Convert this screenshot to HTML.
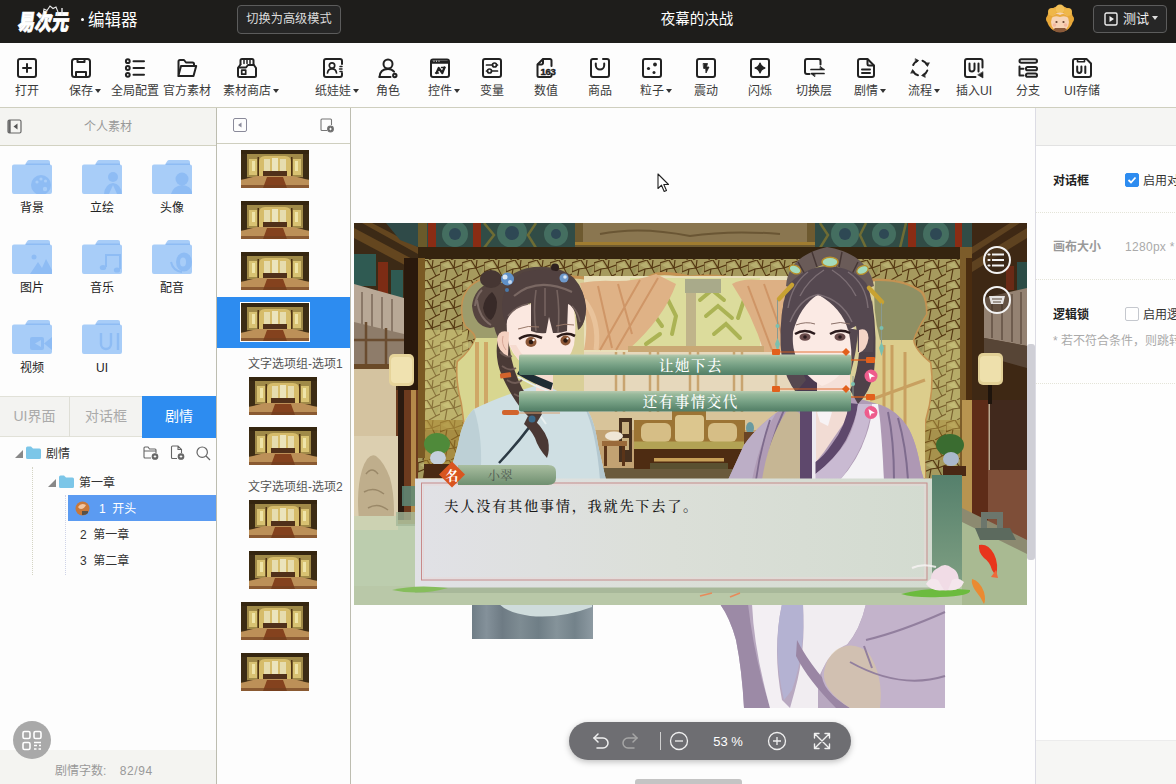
<!DOCTYPE html>
<html lang="zh-CN">
<head>
<meta charset="utf-8">
<title>易次元 · 编辑器</title>
<style>
*{box-sizing:border-box;margin:0;padding:0}
html,body{width:1176px;height:784px;overflow:hidden;background:#fdfdfd}
body{font-family:"Liberation Sans","Noto Sans CJK SC",sans-serif;font-size:12px;color:#333;position:relative}
.abs{position:absolute}
#hdr{position:absolute;left:0;top:0;width:1176px;height:43px;background:#1e1d1b;color:#fff}
#hdr .logo{position:absolute;left:15.5px;top:15px;font-size:17px;line-height:24px;font-weight:900;color:#fff;letter-spacing:0;transform:skewX(-8deg) scaleY(1.3);transform-origin:0 100%;-webkit-text-stroke:.6px #fff}
#hdr .brand{position:absolute;left:88px;top:9px;font-size:16.5px;line-height:22px;color:#fff;white-space:nowrap}
#hdr .mode{position:absolute;left:237px;top:5px;width:104px;height:29px;border:1px solid #5c5c5c;border-radius:4px;color:#dcdcdc;font-size:12.2px;line-height:27px;text-align:center;background:#262626}
#hdr .title{position:absolute;left:597px;top:8px;width:200px;text-align:center;font-size:14.5px;line-height:22px;color:#fff}
#hdr .test{position:absolute;left:1093px;top:5px;width:74px;height:28px;border:1px solid #5c5c5c;border-radius:4px;color:#eee;font-size:13px;line-height:26px;background:#262626}
#hdr .test svg{position:absolute;left:10px;top:6px;width:14px;height:14px}
#hdr .test span{position:absolute;left:29px;top:0}
#hdr .test i{position:absolute;left:58px;top:10px;width:0;height:0;border:3.5px solid transparent;border-top:4.5px solid #ddd;border-bottom:0}
#hdr .avatar{position:absolute;left:1046px;top:4px;width:28px;height:30px}
#tb{position:absolute;left:0;top:43px;width:1176px;height:65px;background:#fdfdfd;border-bottom:1px solid #cfcfbf}
.ti{position:absolute;top:0;width:0;height:60px}
.ti svg{position:absolute;left:-10px;top:15px;width:20px;height:20px;fill:none;stroke:#222;stroke-width:2;stroke-linecap:round;stroke-linejoin:round;overflow:visible}
.ti span{position:absolute;left:-50px;width:100px;top:40px;font-size:12px;line-height:16px;white-space:nowrap;color:#3a3a3a;text-align:center}
.ti span.c{left:-46px}
.ti span.c:after{content:"";display:inline-block;width:0;height:0;border:3.5px solid transparent;border-top:4.5px solid #333;border-bottom:0;margin-left:2px;vertical-align:2px}
/* left panel */
#lp{position:absolute;left:0;top:108px;width:217px;height:676px;background:#fdfdfd;border-right:1px solid #bdbdb0}
#lp .ph{position:absolute;left:0;top:0;width:216px;height:38px;background:#f4f4f1;border-bottom:1px solid #d2d2c2;color:#999;font-size:12px;line-height:38px;text-align:center}
.fold{position:absolute;width:40px;height:34px}
.fl{position:absolute;width:60px;margin-left:-10px;text-align:center;font-size:12px;line-height:14px;color:#222}
#tabs{position:absolute;left:0;top:288px;width:216px;height:41px;background:#f3f3f1;border-top:1px solid #e1e1d8;border-bottom:1px solid #e1e1d8}
#tabs div{position:absolute;top:0;height:40px;line-height:39px;text-align:center;font-size:14px;color:#aaa}
.tr{position:absolute;font-size:12px;line-height:16px;color:#333;white-space:nowrap}
#foot{position:absolute;left:0;top:642px;width:216px;height:34px;background:#f4f4f1;color:#999;font-size:12px;line-height:16px}
/* slides */
#sp{position:absolute;left:217px;top:108px;width:134px;height:676px;background:#fdfdfd;border-right:1px solid #bdbdb0}
#sp .ph{position:absolute;left:0;top:0;width:133px;height:36px;border-bottom:1px solid #cfcfbf}
.th{position:absolute;width:68px;height:38px}
.sl{position:absolute;font-size:12px;line-height:16px;color:#555;white-space:nowrap}
/* right */
#rp{position:absolute;left:1035px;top:108px;width:141px;height:676px;background:#fefefe;border-left:1px solid #dcdce4}
#rp .ph{position:absolute;left:0;top:0;width:141px;height:38px;background:#f5f5f3;border-bottom:1px solid #e2e2e2}
#rp .lb{position:absolute;left:17px;font-size:12px;line-height:16px;font-weight:bold;color:#222;white-space:nowrap}
#rp .tx{position:absolute;font-size:12px;line-height:16px;white-space:nowrap}
#rp .sep{position:absolute;left:0;width:141px;height:0;border-top:1px dotted #e4e4d8}
.cb{position:absolute;width:14px;height:14px;border:1px solid #c5c8ce;border-radius:2px;background:#fff}
.cb.on{background:#2d8cf0;border-color:#2d8cf0}
/* canvas */
#cv{position:absolute;left:351px;top:108px;width:684px;height:676px;background:#fdfdfd;overflow:hidden}
#zoom{position:absolute;left:218px;top:614px;width:282px;height:38px;border-radius:19px;background:#6e6e72;color:#fff;box-shadow:0 2px 6px rgba(0,0,0,.25)}
</style>
</head>
<body>
<div id="hdr">
  <div class="logo">易次元</div>
  <svg class="abs" style="left:40px;top:3px" width="26" height="16" viewBox="0 0 26 16" fill="none" stroke="#e8e8e8" stroke-width="1.100"><path d="M3 12L4 6L7 7.500L10 3L13 5.500L16 4L18 9L17 13"/><path d="M22 5V12" stroke-width="1.400"/></svg>
  <div class="abs" style="left:80.500px;top:17.500px;width:3.500px;height:3.500px;border-radius:2px;background:#fff"></div><div class="brand">编辑器</div>
  <div class="mode">切换为高级模式</div>
  <div class="title">夜幕的决战</div>
  <svg class="avatar" viewBox="0 0 28 30"><circle cx="14" cy="15" r="13" fill="#e9a93c"/><circle cx="6" cy="8" r="4" fill="#efb748"/><circle cx="22" cy="8" r="4" fill="#efb748"/><circle cx="14" cy="5" r="4.500" fill="#f2c058"/><circle cx="3.500" cy="15" r="3.500" fill="#e8a838"/><circle cx="24.500" cy="15" r="3.500" fill="#e8a838"/><ellipse cx="14" cy="18" rx="9" ry="9.500" fill="#f6d4b6"/><path d="M5 14Q9 8 14 11Q19 8 23 14Q19 11 14 13Q9 11 5 14Z" fill="#e9a93c"/><path d="M7 26Q14 31 21 26L19 24H9Z" fill="#8a5a3a"/><circle cx="10.500" cy="18" r="1.100" fill="#6a4632"/><circle cx="17.500" cy="18" r="1.100" fill="#6a4632"/><circle cx="8.500" cy="21" r="1.800" fill="#f3b8a0"/><circle cx="19.500" cy="21" r="1.800" fill="#f3b8a0"/></svg>
  <div class="test"><svg viewBox="0 0 14 14" fill="none" stroke="#eee" stroke-width="1.4"><rect x="1" y="1" width="12" height="12" rx="1.5"/><path d="M5.5 4 L10 7 L5.5 10Z" fill="#eee" stroke="none"/></svg><span>测试</span><i></i></div>
</div>
<div id="tb">
  <div class="ti" style="left:27px"><svg viewBox="0 0 20 20"><rect x="1" y="1" width="18" height="18" rx="2"/><path d="M10 6v8M6 10h8"/></svg><span>打开</span></div>
  <div class="ti" style="left:81px"><svg viewBox="0 0 20 20"><rect x="1" y="1" width="18" height="18" rx="2.5"/><path d="M6.5 1.5v2.500h7V1.500M5 18.500V14h10v4.500"/></svg><span class="c" style="left:-46px">保存</span></div>
  <div class="ti" style="left:135px"><svg viewBox="0 0 20 20"><circle cx="2.800" cy="3.200" r="1.900"/><circle cx="2.800" cy="10" r="1.900"/><circle cx="2.800" cy="16.800" r="1.900"/><path d="M8.500 3.200H19M8.500 10H19M8.500 16.800H19"/></svg><span>全局配置</span></div>
  <div class="ti" style="left:187px"><svg viewBox="0 0 20 20"><path d="M1.500 16V3.500a1.500 1.500 0 0 1 1.500-1.500h4l2 2.500h6.500a1.500 1.500 0 0 1 1.500 1.500v2"/><path d="M4 8h15.200l-2.700 10H1.300z"/></svg><span>官方素材</span></div>
  <div class="ti" style="left:247px"><svg viewBox="0 0 20 20"><path d="M3.500 6V2.500a1.500 1.500 0 0 1 1.500-1.500h10a1.500 1.500 0 0 1 1.500 1.500V6"/><path d="M7 1.500v4M10 1.500v4M13 1.500v4" stroke-width="1.500"/><path d="M3.500 6.500L1 10v7.500a1.500 1.500 0 0 0 1.500 1.500h15a1.500 1.500 0 0 0 1.500-1.500V10l-2.500-3.500"/><path d="M1.500 9.500h7.500l2-2.500h5.500"/><rect x="4.700" y="12.200" width="4" height="4" stroke-width="1.700"/></svg><span class="c">素材商店</span></div>
  <div class="ti" style="left:333px"><svg viewBox="0 0 20 20"><path d="M19 6V3a2 2 0 0 0-2-2H3a2 2 0 0 0-2 2v14a2 2 0 0 0 2 2h14a2 2 0 0 0 2-2v-2"/><circle cx="9" cy="7.500" r="2.700" stroke-width="1.700"/><path d="M4.500 15c.3-3 2.300-4.200 4.500-4.200s4.200 1.200 4.500 4.200" stroke-width="1.700"/><path d="M17 8.500h2M16.500 11h2.500M17 13.500h2" stroke-width="1.500"/></svg><span class="c">纸娃娃</span></div>
  <div class="ti" style="left:388px"><svg viewBox="0 0 20 20"><circle cx="10" cy="6" r="4.500"/><path d="M1.500 19c.3-5 3.500-8 8.500-8 2.500 0 4.600 1 6 2.700"/><path d="M1.500 19h11"/><circle cx="16.800" cy="17.500" r="1.700"/></svg><span>角色</span></div>
  <div class="ti" style="left:440px"><svg viewBox="0 0 20 20"><rect x="1" y="1.500" width="18" height="17.500" rx="2"/><path d="M1.500 3h17v2.200h-17z" fill="#222" stroke-width="1"/><path d="M3.500 3.200h1M6 3.200h1M8.500 3.200h1" stroke="#fff" stroke-width="1" stroke-linecap="butt"/><path d="M6.500 15l2.200-5 3.600 5 2.200-5.500" stroke-width="2.200"/><path d="M5.500 15h3M11.500 9.500h3.500" stroke-width="1.400"/></svg><span class="c">控件</span></div>
  <div class="ti" style="left:492px"><svg viewBox="0 0 20 20"><rect x="1" y="1" width="18" height="18" rx="2"/><path d="M4.500 7h6M15 7h.500M4.500 13h.500M10 13h5.500" stroke-width="1.700"/><circle cx="12.500" cy="7" r="2" stroke-width="1.700"/><circle cx="7.500" cy="13" r="2" stroke-width="1.700"/></svg><span>变量</span></div>
  <div class="ti" style="left:546px"><svg viewBox="0 0 20 20"><path d="M15.500 8V2.500a1.500 1.500 0 0 0-1.500-1.500H7L1.500 6.500V17.500a1.500 1.500 0 0 0 1.500 1.500h11a1.500 1.500 0 0 0 1.500-1.500V17"/><path d="M7 1.500V5a1.500 1.500 0 0 1-1.500 1.500H2"/><text x="4.600" y="16.600" font-family="Liberation Sans,sans-serif" font-size="9.600" font-weight="bold" fill="#222" stroke="#222" stroke-width=".4" letter-spacing="-0.400">163</text></svg><span>数值</span></div>
  <div class="ti" style="left:600px"><svg viewBox="0 0 20 20"><path d="M7 1H3a2 2 0 0 0-2 2v14a2 2 0 0 0 2 2h14a2 2 0 0 0 2-2V3a2 2 0 0 0-2-2h-4"/><path d="M5.800 5.500v1.800a4.200 4.200 0 0 0 8.400 0V5.500"/></svg><span>商品</span></div>
  <div class="ti" style="left:652px"><svg viewBox="0 0 20 20"><rect x="1" y="1" width="18" height="18" rx="2"/><circle cx="13" cy="6.500" r="1.900" fill="#222" stroke="none"/><circle cx="6.500" cy="10.500" r="1.600" fill="#222" stroke="none"/><circle cx="12" cy="14.500" r="1.500" fill="#222" stroke="none"/></svg><span class="c">粒子</span></div>
  <div class="ti" style="left:706px"><svg viewBox="0 0 20 20"><rect x="1" y="1" width="18" height="18" rx="2"/><path d="M7.500 5.500h4l-1 3.500h2.500l-3 6-.300-4.500H8z" fill="#222" stroke-width=".8"/></svg><span>震动</span></div>
  <div class="ti" style="left:760px"><svg viewBox="0 0 20 20"><rect x="1" y="1" width="18" height="18" rx="2"/><path d="M10 5.200Q11 9 14.800 10Q11 11 10 14.800Q9 11 5.200 10Q9 9 10 5.200z" fill="#222" stroke-width="1.400"/></svg><span>闪烁</span></div>
  <div class="ti" style="left:814px"><svg viewBox="0 0 20 20"><path d="M16.500 6.500V3a2 2 0 0 0-2-2H3a2 2 0 0 0-2 2v11a2 2 0 0 0 2 2h2.500"/><path d="M7 11.500h13M7.500 15.500h12.500" stroke-width="1.700"/><path d="M16.500 8.500l3.500 3h-3.500zM10.500 18.500l-3.500-3h3.500z" fill="#222" stroke-width=".8"/></svg><span>切换层</span></div>
  <div class="ti" style="left:866px"><svg viewBox="0 0 20 20"><path d="M11.500 1H4a2 2 0 0 0-2 2v14a2 2 0 0 0 2 2h12a2 2 0 0 0 2-2V7.500z"/><path d="M11.500 1.500V6a1.500 1.500 0 0 0 1.500 1.500h4.500"/><path d="M6 11.500h8M6 15h8" stroke-width="2"/></svg><span class="c">剧情</span></div>
  <div class="ti" style="left:920px"><svg viewBox="0 0 20 20"><path d="M3.200 7A7.600 7.600 0 0 1 7 3.200M12.500 2.700A7.600 7.600 0 0 1 16.800 6.500M17.300 12.500A7.600 7.600 0 0 1 13.500 16.800M8 17.300A7.600 7.600 0 0 1 3.200 13.500"/><path d="M5.500 .8L8.800 2.600L5.800 4.600zM19.300 5L17.500 8.500L15.500 5.300zM15 19.300L11.500 17.500L14.500 15.500zM.8 15L2.600 11.500L4.600 14.500z" fill="#222" stroke-width=".6"/></svg><span class="c">流程</span></div>
  <div class="ti" style="left:974px"><svg viewBox="0 0 20 20"><path d="M18.500 9.500V3a2 2 0 0 0-2-2H3a2 2 0 0 0-2 2v14a2 2 0 0 0 2 2h8.500"/><path d="M5.500 5.500v5.500a2.500 2.500 0 0 0 5 0V5.500M14.500 5.500v8"/><path d="M19 14v6l-5-3z" fill="#222" stroke-width=".6"/></svg><span>插入UI</span></div>
  <div class="ti" style="left:1028px"><svg viewBox="0 0 20 20"><rect x="1.500" y="1.200" width="17.500" height="3.600" rx="1.800"/><rect x="8" y="9" width="11" height="3.300" rx="1.600"/><rect x="8" y="15.500" width="11" height="3.300" rx="1.600"/><path d="M1.500 8.500v9h4M1.500 10.700h4"/></svg><span>分支</span></div>
  <div class="ti" style="left:1082px"><svg viewBox="0 0 20 20"><path d="M14.500 1H3a2 2 0 0 0-2 2v14a2 2 0 0 0 2 2h14a2 2 0 0 0 2-2V5.500z"/><path d="M5.500 1.500v2.300h7V1.500" stroke-width="1.600"/><path d="M5.200 8.500v4.300a2.100 2.100 0 0 0 4.200 0V8.500M13.300 8.500v6.500"/></svg><span>UI存储</span></div>
</div>
<svg width="0" height="0" style="position:absolute">
  <defs>
    <symbol id="fd" viewBox="0 0 40 34"><path d="M0 6.500Q0 4.500 2 4.500H13L15.500 .8Q16 0 17 0H36Q38 0 38 2V4.500Q40 4.500 40 6.500V32Q40 34 38 34H2Q0 34 0 32Z" fill="#a8cdf8"/><path d="M14.500 3.500H38V5H13.500Z" fill="#8ebcf4"/></symbol>
    <symbol id="thumb" viewBox="0 0 68 38" preserveAspectRatio="none">
      <rect width="68" height="38" fill="#584020"/>
      <rect x="0" y="0" width="68" height="4" fill="#352610"/>
      <rect x="6" y="4" width="56" height="23" fill="#a08a48"/>
      <path d="M18 27V12Q18 6 24 6H44Q50 6 50 12V27Z" fill="#d6bc6a"/>
      <rect x="23" y="9" width="6" height="13" fill="#e6dcae"/><rect x="31" y="8" width="6" height="14" fill="#ebe4bc"/><rect x="39" y="9" width="6" height="13" fill="#e6dcae"/>
      <rect x="8" y="9" width="8" height="16" fill="#d8c272"/>
      <rect x="52" y="9" width="8" height="16" fill="#d8c272"/>
      <rect x="11" y="11" width="3" height="10" fill="#efe4a8"/><rect x="54" y="11" width="3" height="10" fill="#efe4a8"/>
      <rect x="0" y="4" width="6" height="25" fill="#3c2c14"/>
      <rect x="62" y="4" width="6" height="25" fill="#3c2c14"/>
      <rect x="16.500" y="7" width="1.500" height="20" fill="#4e3214"/>
      <rect x="50" y="7" width="1.500" height="20" fill="#4e3214"/>
      <rect x="22" y="21" width="24" height="5" fill="#50301a"/>
      <path d="M0 38V30L16 26H52L68 30V38Z" fill="#bc9058"/>
      <path d="M22 38L26 27H42L46 38Z" fill="#84421e"/>
      <rect x="0" y="35" width="68" height="3" fill="#6e3e1e" opacity=".65"/>
    </symbol>
  </defs>
</svg>
<div id="lp">
  <div class="ph">个人素材
    <svg class="abs" style="left:7px;top:11px" width="15" height="15" viewBox="0 0 15 15" fill="none" stroke="#666" stroke-width="1.200"><rect x="1" y="1" width="13" height="13" rx="1.500"/><path d="M2.500 1v13" stroke-width="2.400"/><path d="M10.500 4.500v6l-4-3z" fill="#555" stroke="none"/></svg>
  </div>
  <svg class="fold" style="left:12px;top:52px"><use href="#fd"/><g fill="#8ebcf4"><circle cx="29" cy="25" r="10"/></g><g fill="#a8cdf8"><circle cx="25" cy="22" r="1.600"/><circle cx="29" cy="19" r="1.600"/><circle cx="33.500" cy="21" r="1.600"/><circle cx="33" cy="29" r="2.200"/></g></svg>
  <svg class="fold" style="left:82px;top:52px"><use href="#fd"/><g fill="#8ebcf4"><circle cx="31" cy="17" r="5"/><path d="M22 34Q23 24 31 23Q39 24 40 34Z"/></g><path d="M27 34L31 25L35 34Z" fill="#a8cdf8"/></svg>
  <svg class="fold" style="left:152px;top:52px"><use href="#fd"/><g fill="#8ebcf4"><circle cx="30" cy="19" r="6.500"/><path d="M19 34Q21 26 30 25Q39 26 40 32V34Z"/></g></svg>
  <div class="fl" style="left:12px;top:92.500px">背景</div>
  <div class="fl" style="left:82px;top:92.500px">立绘</div>
  <div class="fl" style="left:152px;top:92.500px">头像</div>
  <svg class="fold" style="left:12px;top:132px"><use href="#fd"/><g fill="#8ebcf4"><path d="M18 34L26 22L30 28L34 19L40 30V34Z"/><circle cx="22" cy="17" r="2.500"/></g></svg>
  <svg class="fold" style="left:82px;top:132px"><use href="#fd"/><g fill="none" stroke="#8ebcf4" stroke-width="2"><path d="M24 27V15H38V29"/></g><g fill="#8ebcf4"><ellipse cx="21" cy="27.500" rx="3.200" ry="2.600"/><ellipse cx="35" cy="30" rx="3.200" ry="2.600"/></g></svg>
  <svg class="fold" style="left:152px;top:132px"><use href="#fd"/><g fill="#8ebcf4"><ellipse cx="32" cy="22" rx="8" ry="9.500"/><path d="M19 22Q21 31 30 32" fill="none" stroke="#8ebcf4" stroke-width="2"/></g><ellipse cx="31" cy="22" rx="3" ry="4.500" fill="#a8cdf8"/></svg>
  <div class="fl" style="left:12px;top:172.500px">图片</div>
  <div class="fl" style="left:82px;top:172.500px">音乐</div>
  <div class="fl" style="left:152px;top:172.500px">配音</div>
  <svg class="fold" style="left:12px;top:212px"><use href="#fd"/><g fill="#8ebcf4"><rect x="18" y="17" width="14" height="13" rx="2"/><path d="M32 23.500L40 17V30Z"/></g><path d="M29 20L23 23.500L29 27Z" fill="#a8cdf8"/></svg>
  <svg class="fold" style="left:82px;top:212px"><use href="#fd"/><g fill="none" stroke="#8ebcf4" stroke-width="2.400"><path d="M19 13V24a5 5 0 0 0 10 0V13M36 13V30"/></g></svg>
  <div class="fl" style="left:12px;top:252.500px">视频</div>
  <div class="fl" style="left:82px;top:252.500px">UI</div>
  <div id="tabs">
    <div style="left:0;width:70px;border-right:1px solid #deded6">UI界面</div>
    <div style="left:70px;width:72px">对话框</div>
    <div style="left:142px;width:74px;background:#2d8cf0;color:#fff;top:-1px;height:42px;line-height:41px">剧情</div>
  </div>
  <!-- tree -->
  <svg class="abs" style="left:15px;top:342px" width="9" height="9"><path d="M8 0V8H0Z" fill="#888"/></svg>
  <svg class="abs" style="left:26px;top:338px" width="15" height="13" viewBox="0 0 15 13"><path d="M0 2Q0 .5 1.500 .5H5L7 2.500H13.500Q15 2.500 15 4V11.500Q15 13 13.500 13H1.500Q0 13 0 11.500Z" fill="#7cc6e8"/></svg>
  <div class="tr" style="left:46px;top:338px">剧情</div>
  <svg class="abs" style="left:143px;top:338px" width="16" height="14" viewBox="0 0 16 14" fill="none" stroke="#666" stroke-width="1.100"><path d="M8 12H2Q1 12 1 11V2Q1 1 2 1H5L6.500 3H12Q13 3 13 4V7M1 5H13"/><circle cx="12" cy="10.500" r="2.800" fill="#666"/><path d="M10.700 10.500h2.600M12 9.200v2.600" stroke="#fff" stroke-width=".9"/></svg>
  <svg class="abs" style="left:170px;top:337px" width="15" height="15" viewBox="0 0 15 15" fill="none" stroke="#666" stroke-width="1.100"><path d="M7 13.500H2.500Q1.500 13.500 1.500 12.500V2Q1.500 1 2.500 1H8L11.500 4.500V8M8 1V4.500H11.500"/><circle cx="11" cy="11.500" r="2.800" fill="#666"/><path d="M9.700 11.500h2.600M11 10.200v2.600" stroke="#fff" stroke-width=".9"/></svg>
  <svg class="abs" style="left:196px;top:338px" width="15" height="15" viewBox="0 0 15 15" fill="none" stroke="#666" stroke-width="1.200"><circle cx="6.200" cy="6.200" r="5.200"/><path d="M10 10L14 14"/></svg>
  <svg class="abs" style="left:48px;top:371px" width="9" height="9"><path d="M8 0V8H0Z" fill="#888"/></svg>
  <svg class="abs" style="left:59px;top:367px" width="15" height="13" viewBox="0 0 15 13"><path d="M0 2Q0 .5 1.500 .5H5L7 2.500H13.500Q15 2.500 15 4V11.500Q15 13 13.500 13H1.500Q0 13 0 11.500Z" fill="#7cc6e8"/></svg>
  <div class="tr" style="left:79px;top:366.500px">第一章</div>
  <div class="abs" style="left:32px;top:359px;width:0;height:108px;border-left:1px dotted #d4d4c4"></div>
  <div class="abs" style="left:65px;top:387px;width:0;height:80px;border-left:1px dotted #cfd4e8"></div>
  <div class="abs" style="left:68px;top:387px;width:148px;height:26px;background:#5b9bf2"></div>
  <svg class="abs" style="left:75px;top:393px" width="15" height="15" viewBox="0 0 15 15"><circle cx="7.500" cy="7.500" r="7" fill="#c8783a"/><path d="M3 6Q6 1 11 4Q9 8 6 8Q4 8 3 6Z" fill="#f3c7a2"/><path d="M7 14V10H13V12Q11 14.500 7 14Z" fill="#55504a"/></svg>
  <div class="tr" style="left:99px;top:393px;color:#fff">1&nbsp; 开头</div>
  <div class="tr" style="left:80px;top:419px">2&nbsp; 第一章</div>
  <div class="tr" style="left:80px;top:445px">3&nbsp; 第二章</div>
  <div id="foot"><span class="abs" style="left:55px;top:12.500px;white-space:nowrap">剧情字数:&nbsp;&nbsp;&nbsp; <span style="letter-spacing:.6px">82/94</span></span></div>
  <svg class="abs" style="left:13px;top:613px" width="38" height="38" viewBox="0 0 38 38"><circle cx="19" cy="19" r="19" fill="#a9a9a9"/><g fill="none" stroke="#fff" stroke-width="1.600"><rect x="10" y="10.500" width="7" height="7" rx="1.500"/><rect x="21" y="10.500" width="7" height="7" rx="1.500"/><rect x="10" y="21.500" width="7" height="7" rx="1.500"/><path d="M21 21.500h7M21 24.500h3M26 24.500h2M21 28h2.500M25.500 28h2.500" stroke-width="1.400"/></g></svg>
</div>
<div id="sp">
  <div class="ph">
    <svg class="abs" style="left:16px;top:10px" width="14" height="14" viewBox="0 0 14 14" fill="none" stroke="#8a8a9a" stroke-width="1"><rect x=".5" y=".5" width="13" height="13" rx="1.500"/><path d="M8.500 4.500v5l-3.500-2.500z" fill="#8a8a9a" stroke="none"/></svg>
    <svg class="abs" style="left:103px;top:10px" width="15" height="15" viewBox="0 0 15 15" fill="none" stroke="#777" stroke-width="1.100"><path d="M7 12.500H2Q1 12.500 1 11.500V2Q1 1 2 1H10.500Q11.500 1 11.500 2V7"/><circle cx="10.500" cy="11" r="2.900" fill="#666"/><path d="M9.200 11h2.600M10.500 9.700v2.600" stroke="#fff" stroke-width=".9"/></svg>
  </div>
  <svg class="th" style="left:24px;top:42px"><use href="#thumb"/></svg>
  <svg class="th" style="left:24px;top:93px"><use href="#thumb"/></svg>
  <svg class="th" style="left:24px;top:144px"><use href="#thumb"/></svg>
  <div class="abs" style="left:0;top:189px;width:133px;height:51px;background:#2d8cf0"></div>
  <div class="abs" style="left:23px;top:194px;width:70px;height:40px;background:#fff"></div>
  <svg class="th" style="left:24px;top:195px"><use href="#thumb"/></svg>
  <div class="sl" style="left:31px;top:247.500px">文字选项组-选项1</div>
  <svg class="th" style="left:32px;top:269px"><use href="#thumb"/></svg>
  <svg class="th" style="left:32px;top:319px"><use href="#thumb"/></svg>
  <div class="sl" style="left:31px;top:370.500px">文字选项组-选项2</div>
  <svg class="th" style="left:32px;top:392px"><use href="#thumb"/></svg>
  <svg class="th" style="left:32px;top:443px"><use href="#thumb"/></svg>
  <svg class="th" style="left:24px;top:494px"><use href="#thumb"/></svg>
  <svg class="th" style="left:24px;top:545px"><use href="#thumb"/></svg>
</div>
<div id="cv">
<svg class="abs" style="left:0;top:0" width="684" height="676" viewBox="351 108 684 676">
<defs>
  <clipPath id="sc"><rect x="354" y="223" width="673" height="382"/></clipPath>
  <pattern id="lat" width="22" height="20" patternUnits="userSpaceOnUse">
    <rect width="22" height="20" fill="#a69a5e"/>
    <path d="M0 3L9 0L14 8L22 5M0 12L7 9L14 8L18 16L22 14M7 9L5 20M18 16L11 20M0 3V12M9 0V-2M14 8L15 0" fill="none" stroke="#553812" stroke-width="1.200"/>
    <path d="M2 5L8 2L12 8L7 8Z" fill="#c0b878" opacity=".7"/><path d="M15 9L21 7L18 15Z" fill="#8e8a50" opacity=".6"/>
  </pattern>
  <pattern id="teal" width="56" height="24" patternUnits="userSpaceOnUse" x="426" y="223">
    <rect width="56" height="24" fill="#34544e"/>
    <rect x="1" y="0" width="8" height="24" fill="#8a2c14"/>
    <circle cx="32" cy="11" r="12" fill="#4f7f70"/>
    <circle cx="32" cy="11" r="6" fill="#3a6a6a"/>
    <path d="M12 0L20 12L12 24M52 0L44 12L52 24" stroke="#6a6a30" stroke-width="2" fill="none"/>
  </pattern>
  <linearGradient id="bar" x1="0" y1="0" x2="0" y2="1">
    <stop offset="0" stop-color="#b8cab0"/><stop offset=".15" stop-color="#9aba9c"/><stop offset=".5" stop-color="#78a286"/><stop offset=".85" stop-color="#5c886e"/><stop offset="1" stop-color="#527e68"/>
  </linearGradient>
  <linearGradient id="dlg" x1="0" y1="0" x2="1" y2="0"><stop offset="0" stop-color="#e1e1e6"/><stop offset=".5" stop-color="#dbdfd8"/><stop offset="1" stop-color="#d3dbd0"/></linearGradient>
  <linearGradient id="nm" x1="0" y1="0" x2="0" y2="1">
    <stop offset="0" stop-color="#a9bea0"/><stop offset="1" stop-color="#6f8f70"/>
  </linearGradient>
  <linearGradient id="gp" x1="0" y1="0" x2="0" y2="1">
    <stop offset="0" stop-color="#55806c"/><stop offset="1" stop-color="#86a486"/>
  </linearGradient>
  <linearGradient id="skirt" x1="0" y1="0" x2="1" y2="0">
    <stop offset="0" stop-color="#6f7d86"/><stop offset=".12" stop-color="#84919a"/><stop offset=".25" stop-color="#6e7b84"/><stop offset=".4" stop-color="#7e8c93"/><stop offset=".55" stop-color="#6f7e86"/><stop offset=".7" stop-color="#85939a"/><stop offset=".85" stop-color="#73828a"/><stop offset="1" stop-color="#8d9aa2"/>
  </linearGradient>
</defs>

<!-- characters below the scene -->
<g id="below">
  <path d="M472 604H593V639H472Z" fill="url(#skirt)"/>
  <path d="M478 604H592V607Q560 619 530 616Q508 613 499 604Z" fill="#cfdcdc"/>
  <path d="M720 604H945V708H744Q742 670 736 640Q730 618 720 604Z" fill="#b8a8c0"/>
  <path d="M720 604H748Q752 640 762 680L770 708H744Q742 670 736 640Q730 618 720 604Z" fill="#9c8aa6"/>
  <path d="M752 604H782Q772 650 782 700L790 708H770Q754 650 752 604Z" fill="#f3eff3"/>
  <path d="M782 604H803Q806 650 792 690L784 700Q772 650 782 604Z" fill="#b4b2d2"/>
  <path d="M803 604H866Q860 630 846 646Q826 656 818 680V708H790L795 690Q806 650 803 604Z" fill="#f1edf1"/>
  <path d="M797 640Q812 670 850 708H836Q808 680 796 656Z" fill="#9a86a4"/>
  <path d="M866 604H945V708H850Q820 690 822 672Q828 652 848 644Q860 630 866 604Z" fill="#c3b3cb"/>
  <path d="M836 650Q852 640 868 652Q884 676 880 708H850Q822 690 824 672Q826 658 836 650Z" fill="#dccb9c" opacity=".55"/>
  <path d="M866 640Q900 632 945 612M850 662Q900 690 945 676M864 646L872 668" stroke="#927f9e" stroke-width="2" fill="none"/>
</g>

<g clip-path="url(#sc)">
  <!-- base -->
  <rect x="354" y="223" width="673" height="382" fill="#b39a62"/>
  <!-- lattice wall -->
  <rect x="418" y="258" width="550" height="220" fill="url(#lat)"/>
  <rect x="424" y="330" width="44" height="100" fill="#e8e088" opacity=".35"/>
  <rect x="924" y="340" width="38" height="90" fill="#e8e088" opacity=".25"/>
  <rect x="424" y="420" width="44" height="46" fill="#a8842e" opacity=".55"/>
  <rect x="924" y="420" width="38" height="40" fill="#a8842e" opacity=".35"/>
  <!-- moon gate opening -->
  <path id="gate" d="M482 280Q466 286 463 302Q461 316 466 326Q477 334 476 340Q472 350 458 362Q456 380 462 403Q466 430 470 480H925Q922 440 925 420Q934 390 930 363Q914 350 913 340Q916 330 926 314Q926 296 921 292Q905 280 875 280H742Q716 274 690 277Q670 272 656 274Q634 284 612 283Q560 270 482 280Z" fill="#d9cf98" stroke="#c49252" stroke-width="3"/>
  <!-- left window inside gate -->
  <path d="M482 280Q466 286 463 302Q461 316 466 326Q476 333 476 338H530V279Q500 277 482 280Z" fill="#9d9c6c"/>
  <path d="M476 338Q472 350 458 362Q456 380 462 403Q466 430 470 480H530V338Z" fill="#d8d690"/>
  <path d="M477 342V478M486 342V478" stroke="#cfa766" stroke-width="4"/>
  <!-- center bright window -->
  <rect x="584" y="276" width="210" height="140" fill="#e9dfba"/>
  <rect x="630" y="278" width="130" height="72" fill="#dcdc9c"/>
  <g stroke="#a2ac48" stroke-width="4" fill="none" opacity=".85" stroke-linecap="round">
    <path d="M640 330L652 312L662 326M646 344L660 334M668 300L676 316L672 334M700 300L712 290L724 300M706 316L718 306L732 318M714 334L726 324L740 338M744 300L738 318"/>
  </g>
  <rect x="686" y="279" width="10" height="72" fill="#c0b48a"/>
  <rect x="685" y="279" width="36" height="14" fill="#a9aa8a"/>
  <!-- curtains -->
  <path d="M580 283Q600 280 612 281Q634 282 656 274L676 284Q664 318 628 350H584Q590 320 580 283Z" fill="#dfb286"/>
  <path d="M598 286L612 348M618 284L632 334M640 280L600 350M658 278L616 350" stroke="#c98c5c" stroke-width="2" fill="none" opacity=".75"/>
  <path d="M584 300Q600 320 596 350" stroke="#eccaa4" stroke-width="5" fill="none" opacity=".7"/>
  <path d="M732 284Q742 278 760 280H800V352H764Q752 314 732 284Z" fill="#ddb084"/>
  <path d="M748 286L772 350M764 284L784 340" stroke="#c98c5c" stroke-width="2" fill="none" opacity=".75"/>
  <!-- window frames -->
  <rect x="628" y="346" width="136" height="6" fill="#c9a874"/>
  <rect x="584" y="352" width="210" height="60" fill="#e6d8bc"/>
  <path d="M616 352V412M624 352V412M650 352V412M658 352V412M690 352V412M698 352V412M734 352V412M742 352V412M776 352V412" stroke="#c8a470" stroke-width="2.500"/>
  <rect x="584" y="412" width="30" height="18" fill="#b6c486"/>
  <!-- right fan-shaped shade inside gate -->
  <path d="M875 281Q905 280 921 293Q926 300 926 314Q916 330 913 340H880Q872 310 875 281Z" fill="#8f9064"/>
  <path d="M880 340H913Q914 350 930 363Q934 390 925 420V478H870V380Z" fill="#dccd8c"/>
  <path d="M884 345V478M892 345V478M905 352V478" stroke="#c8a060" stroke-width="3"/>
  <path d="M870 400L925 380" stroke="#c8a060" stroke-width="3"/>
  <!-- floor and furniture -->
  <rect x="584" y="428" width="212" height="52" fill="#c2a272"/>
  <rect x="584" y="412" width="212" height="18" fill="#d8c49a"/>
  <rect x="600" y="468" width="180" height="12" fill="#6a5a3c"/>
  <rect x="619" y="418" width="13" height="44" fill="#46301e"/>
  <rect x="622" y="422" width="7" height="12" fill="#c8b080"/><rect x="622" y="438" width="7" height="12" fill="#c8b080"/>
  <!-- sofa -->
  <path d="M634 420H672V411H706V420H745V448H634Z" fill="#9c7434"/>
  <rect x="641" y="423" width="30" height="19" rx="6" fill="#d6be86"/>
  <rect x="675" y="415" width="29" height="27" rx="4" fill="#dcc68e"/>
  <rect x="708" y="423" width="29" height="19" rx="6" fill="#d6be86"/>
  <rect x="634" y="441.500" width="111" height="7.500" fill="#b2a254"/>
  <rect x="634" y="449" width="111" height="20" fill="#4e2c12"/>
  <rect x="654" y="458" width="70" height="3.500" fill="#c8a058"/>
  <rect x="650" y="463" width="78" height="6" fill="#5a5030"/>
  <!-- small table -->
  <ellipse cx="614" cy="436" rx="9" ry="4.500" fill="#efe6d6"/>
  <rect x="602" y="441" width="25" height="5" fill="#9a6a3a"/>
  <rect x="604" y="446" width="3" height="20" fill="#5a3418"/><rect x="622" y="446" width="3" height="20" fill="#5a3418"/>
  <ellipse cx="750" cy="428" rx="4" ry="6" fill="#6a9aa0"/>
  <rect x="744" y="432" width="12" height="30" fill="#6a4424"/>
  <!-- top band -->
  <rect x="354" y="223" width="673" height="25" fill="#314c46"/>
  <g fill="#446e60"><circle cx="455" cy="234" r="13"/><circle cx="512" cy="233" r="15"/><circle cx="556" cy="234" r="12"/><circle cx="845" cy="234" r="14"/><circle cx="884" cy="234" r="12"/><circle cx="936" cy="234" r="13"/></g>
  <g fill="#2e4854"><circle cx="455" cy="234" r="6"/><circle cx="512" cy="233" r="7"/><circle cx="556" cy="234" r="5"/><circle cx="845" cy="234" r="6"/><circle cx="884" cy="234" r="5"/><circle cx="936" cy="234" r="6"/></g>
  <path d="M484 223L494 235L484 248M536 223L528 235L536 248M820 223L828 235L820 248M866 223L860 235L866 248M900 248L906 223" stroke="#6e6c34" stroke-width="2.500" fill="none"/>
  <rect x="418" y="223" width="9" height="25" fill="#6a5a2a"/>
  <rect x="428" y="223" width="8" height="25" fill="#8a2c14"/><rect x="473" y="223" width="8" height="25" fill="#8a2c14"/>
  <rect x="908" y="223" width="8" height="25" fill="#8a2c14"/><rect x="955" y="223" width="7" height="25" fill="#8a2c14"/>
  <rect x="575" y="223" width="240" height="25" fill="#6e5a30"/>
  <rect x="583" y="223" width="224" height="19" fill="#8a7650"/>
  <path d="M600 234Q640 226 690 236Q730 230 780 234" stroke="#6a5634" stroke-width="2" fill="none"/>
  <rect x="575" y="242" width="240" height="3" fill="#a07c30"/>
  <!-- beam -->
  <rect x="418" y="247" width="552" height="12" fill="#35240f"/>
  <!-- left wall -->
  <rect x="354" y="223" width="64" height="260" fill="#3c2a16"/>
  <path d="M354 228L418 262V272L354 238ZM372 223L418 247V254L362 223Z" fill="#64461f"/>
  <path d="M386 223H418V247L400 240Z" fill="#2f4a48"/>
  <rect x="354" y="254" width="22" height="32" fill="#2f5a52"/><rect x="378" y="262" width="10" height="34" fill="#7c2c14"/><rect x="391" y="270" width="12" height="34" fill="#2f5a52"/>
  <path d="M354 284L404 298V368H354Z" fill="#b8a896"/>
  <path d="M362 292V366M372 294V366M382 297V368M392 299V368" stroke="#8a7868" stroke-width="2"/>
  <path d="M354 322L404 334V368H354Z" fill="#8e7c6a"/><path d="M354 340H404M366 322V366M386 328V366" stroke="#6a4c30" stroke-width="2.500"/>
  <rect x="354" y="368" width="42" height="72" fill="#d4c3a0"/>
  <rect x="354" y="364" width="50" height="5" fill="#6a4a28"/>
  <!-- left pillar -->
  <rect x="404" y="258" width="20" height="180" fill="#2a190c"/>
  <rect x="418" y="258" width="7" height="200" fill="#7a5a24"/>
  <rect x="396" y="390" width="22" height="130" fill="#6c3a1e"/>
  <rect x="411" y="390" width="5" height="130" fill="#b48a4a"/>
  <!-- left lamp -->
  <rect x="398" y="384" width="6" height="136" fill="#2a1a10"/>
  <rect x="389" y="354" width="25" height="32" rx="5" fill="#e6d49a"/>
  <rect x="391" y="357" width="21" height="26" rx="4" fill="#f0e2b0"/>
  <!-- rock painting & green wash lower-left -->
  <rect x="354" y="436" width="44" height="96" fill="#dccfb0"/>
  <path d="M359 520Q356 490 362 470Q368 452 376 456Q384 462 390 478Q396 500 393 530H360Z" fill="#bfae8c"/>
  <path d="M366 474Q372 466 378 474M364 492Q374 486 384 494M368 508Q378 502 388 510" stroke="#9a8868" stroke-width="1.500" fill="none"/>
  <rect x="354" y="524" width="64" height="81" fill="#bccdae"/>
  <rect x="354" y="516" width="44" height="14" fill="#ccd2b2"/>
  
  
  <rect x="402" y="486" width="16" height="20" fill="#5e8a78" opacity=".85"/>
  <rect x="396" y="512" width="22" height="14" fill="#a4b898" opacity=".8"/>
  <!-- plant left -->
  <ellipse cx="437" cy="444" rx="13" ry="11" fill="#4f8a3a"/>
  <ellipse cx="438" cy="458" rx="8" ry="7" fill="#c4d0dc"/>
  <rect x="424" y="464" width="34" height="14" fill="#4a2a14"/>
  <!-- right pillar and wall -->
  <rect x="960" y="247" width="12" height="240" fill="#7c5c2a"/>
  <rect x="966" y="258" width="8" height="230" fill="#4a2c10"/>
  <rect x="972" y="223" width="55" height="320" fill="#3e2814"/>
  <path d="M1027 228L972 262V272L1027 238ZM1010 223L972 247V254L1020 223Z" fill="#5e4220"/>
  <rect x="1006" y="266" width="8" height="24" fill="#6a2a16"/><rect x="1017" y="262" width="10" height="28" fill="#2c4c46"/>
  <path d="M984 298L1027 288V346L984 338Z" fill="#948272"/>
  <path d="M992 298V338M1002 296V340M1012 294V342M1021 292V344" stroke="#6e5c4e" stroke-width="2"/><path d="M984 338L1027 346V368L984 356Z" fill="#5e4c3e" opacity=".8"/>
  <rect x="962" y="400" width="10" height="126" fill="#b89450"/><rect x="972" y="400" width="17" height="126" fill="#5e2c18"/>
  <rect x="988.500" y="400" width="1.500" height="120" fill="#b8a890"/>
  <rect x="990" y="400" width="37" height="110" fill="#41291d"/>
  <path d="M988 470H1027V542L988 522Z" fill="#7e4e38"/>
  <!-- right lamp -->
  <rect x="988" y="384" width="4" height="20" fill="#1e140c"/>
  <rect x="978" y="353" width="25" height="32" rx="5" fill="#e2d096"/>
  <rect x="980" y="356" width="21" height="26" rx="4" fill="#eee0ac"/>
  <!-- right plant -->
  <ellipse cx="950" cy="445" rx="14" ry="11" fill="#3a6c30"/>
  <ellipse cx="951" cy="459" rx="8" ry="7" fill="#aab8cc"/>
  <rect x="943" y="466" width="23" height="10" fill="#4a2814"/>
  <!-- lower right: green pillar, pond -->
  <rect x="932" y="475" width="30" height="130" fill="url(#gp)"/>
  <path d="M962 520L1027 552V605H962Z" fill="#a9ba92"/>
  <path d="M962 508L1027 540V554L962 522Z" fill="#8c8a70"/>
  <path d="M981 512H1003V530H997V519H987V530H981Z" fill="#6c766c"/><path d="M975 528H1010L1016 540H980Z" fill="#5c6a5e"/>
  <!-- ===== left character ===== -->
  <g id="lc">
    <!-- dress -->
    <path d="M535 386Q500 396 474 409Q462 420 458 445L448 480H606L598 445Q594 416 584 406Q566 396 552 388Z" fill="#cfdfe3"/>
    <path d="M474 409Q484 440 480 480H448L458 445Q462 420 474 409Z" fill="#bdd0d6"/>
    <path d="M584 406Q596 430 600 480H606L598 445Q594 416 584 406Z" fill="#b4c8d0"/>
    <path d="M549 398Q530 430 499 463" stroke="#2c3a44" stroke-width="2.500" fill="none"/>
    <path d="M532 404L546 424" stroke="#e8f0f0" stroke-width="2" fill="none"/>
    <!-- neck & collar -->
    <path d="M536 372H553V392H536Z" fill="#f6dcd0"/>
    <path d="M517 374Q534 384 551 390L553 383Q536 376 520 369Z" fill="#1e2c34"/>
    <path d="M518 377Q534 386 550 392" stroke="#e8f0f0" stroke-width="1.500" fill="none"/>
    <!-- back hair / braid -->
    <path d="M498 338Q494 358 502 376Q512 398 524 412L536 424L542 414Q530 402 522 388Q512 368 510 350L508 338Z" fill="#4a3a36"/>
    <path d="M500 352Q506 358 512 356M502 366Q510 372 516 368M507 380Q516 386 522 380M514 394Q524 400 528 392M522 406Q532 412 536 404" stroke="#705c56" stroke-width="1.800" fill="none"/>
    <path d="M528 416Q542 424 548 440Q550 450 547 458Q538 448 535 438Q531 430 524 424Z" fill="#4a3834"/>
    <circle cx="532" cy="419" r="3.500" fill="#3a6a8a"/>
    <rect x="500" y="373" width="11" height="5" rx="1" fill="#d2642c" transform="rotate(-8 505 375)"/>
    <rect x="502" y="410" width="17" height="5" rx="2" fill="#d2642c"/>
    <path d="M519 413H560" stroke="#d8a070" stroke-width="1.200"/>
    <!-- hair back mass -->
    <path d="M498 338Q488 316 496 292Q508 270 534 267Q560 265 574 278Q588 294 585 316Q584 326 578 330L574 300H510L508 336Z" fill="#54443f"/>
    <!-- left loop bun -->
    <path d="M490 283Q474 288 472 306Q474 326 490 328Q504 326 506 306Q508 290 502 283Z" fill="#55443f"/>
    <path d="M492 292Q484 298 483 308Q485 318 491 320Q497 314 497 302Q496 296 492 292Z" fill="#382a28"/>
    <path d="M477 300Q479 318 491 325M482 290Q476 296 475 306" stroke="#7c6a64" stroke-width="2" fill="none"/>
    <ellipse cx="491" cy="279" rx="11" ry="9" fill="#463633"/>
    <circle cx="555" cy="267.500" r="4" fill="#2e201e"/>
    <!-- face -->
    <path d="M508 305Q505 330 509 345Q516 362 534 372H556Q570 360 574 345Q577 325 573 303Z" fill="#fbe8e0"/>
    <path d="M509 332Q498 329 497 340Q498 352 508 356Z" fill="#f4d0c0"/>
    <path d="M503 336Q501 344 506 350" stroke="#d8a898" stroke-width="1" fill="none"/>
    <path d="M510 345Q516 362 534 372H540Q524 360 516 345Z" fill="#f3d2c4" opacity=".6"/>
    <!-- bangs -->
    <path d="M506 324Q510 307 531 303L531 331Q538 334 546 333L549 317L553 333Q560 333.500 567 331L568 304Q576 307 579 329Q587 320 586 306Q583 284 566 274Q546 266 524 272Q503 283 502 304Q502 316 506 324Z" fill="#514140"/>
    <path d="M536 290Q533 310 536 331M545 288V316M557 290Q560 310 558 332" stroke="#75635f" stroke-width="1.600" fill="none"/>
    <path d="M514 296Q538 276 572 292" stroke="#7a6863" stroke-width="2.200" fill="none"/>
    <path d="M508 316Q516 306 528 304M572 306Q578 312 580 322" stroke="#75635f" stroke-width="1.500" fill="none"/>
    <!-- eyes -->
    <path d="M519 339Q529 332 542 338" stroke="#2a1a18" stroke-width="2.600" fill="none"/>
    <ellipse cx="531" cy="342" rx="5.500" ry="5" fill="#8a5636"/><circle cx="531" cy="342" r="2.300" fill="#2a1810"/><circle cx="533.500" cy="340" r="1.200" fill="#fff"/>
    <path d="M557 337Q566 331 575 336" stroke="#2a1a18" stroke-width="2.600" fill="none"/>
    <ellipse cx="565.500" cy="340.500" rx="5" ry="5" fill="#8a5636"/><circle cx="565.500" cy="340.500" r="2.200" fill="#2a1810"/><circle cx="567.500" cy="338.500" r="1.100" fill="#fff"/>
    <path d="M518 329Q528 325 539 327M556 326Q565 323 574 325" stroke="#9a7a6a" stroke-width="1" fill="none"/>
    <!-- flowers -->
    <circle cx="507.500" cy="279" r="6.500" fill="#5f90c8"/><circle cx="505" cy="277" r="2.500" fill="#dde8f4"/><circle cx="510" cy="282" r="2" fill="#c8daf0"/><circle cx="507" cy="290" r="2" fill="#4a78a8"/>
    <circle cx="564" cy="278" r="4.500" fill="#6f9acc"/><circle cx="565" cy="277" r="1.800" fill="#dde8f4"/>
  </g>
  <!-- ===== right character ===== -->
  <g id="rc">
    <!-- robe -->
    <path d="M800 400Q786 406 776 413Q756 428 744 445L728 480H924L921 470Q916 440 907 426Q896 410 881 405L850 396Z" fill="#b09cb6"/>
    <path d="M776 413Q756 428 744 445L728 480H752Q760 440 776 413Z" fill="#bcaec6"/>
    <path d="M770 420Q760 450 756 480M784 410Q770 440 764 480" stroke="#7d6a8c" stroke-width="1.800" fill="none"/>
    <path d="M786 412Q796 408 800 414V480H762Q768 440 786 412Z" fill="#c6b694"/>
    <path d="M800 406H812V480H800Z" fill="#5e486c"/>
    <path d="M812 408H816V480H812Z" fill="#eeeaf0"/>
    <path d="M816 408L850 398L846 420L824 452L816 462Z" fill="#f2dcd4"/>
    <path d="M817 412Q824 408 832 412L828 426L820 422Z" fill="#f7f3f5"/>
    <path d="M849 403Q846 426 832 444Q824 456 815.500 462V474Q836 458 846 440Q856 420 858 404Z" fill="#5e486c"/>
    <path d="M858 404Q856 424 846 442Q834 460 815.500 474V480H840Q862 452 868 426Q872 412 872 404Z" fill="#c9bad2"/>
    <path d="M872 404Q872 420 866 436Q858 460 840 480H884Q882 440 880 420L878 404Z" fill="#f4f2f5"/>
    <path d="M879 405Q896 410 907 426Q916 440 921 470L924 480H884Q884 440 879 405Z" fill="#ae98b4"/>
    <path d="M888 412Q894 440 894 480M898 418Q906 446 908 480" stroke="#7f6c8e" stroke-width="2" fill="none"/>
    <path d="M797 375H817V391H797Z" fill="#4a3a50"/>
    <path d="M817 372H850V392H817Z" fill="#f5e0d8"/>
    <!-- hair long sides -->
    <path d="M784 300Q778 330 782 360Q786 380 796 392L806 380Q796 360 796 330Z" fill="#554850"/>
    <path d="M872 300Q878 340 874 372Q870 392 858 404L850 390Q860 370 860 330Z" fill="#4e4149"/>
    <!-- top bun arch -->
    <path d="M786 286Q788 256 827 247Q868 254 874 286L858 292Q852 268 828 264Q802 268 800 292Z" fill="#6a5b58"/>
    <path d="M798 262L806 276M812 252L817 267M842 252L839 267M858 262L851 276" stroke="#463735" stroke-width="1.500"/>
    <!-- face -->
    <path d="M793 312Q790 340 796 358Q806 378 822 386Q840 380 850 360Q856 340 852 310L820 292Z" fill="#fbeae4"/>
    <!-- hair cap -->
    <path d="M783 352Q779 302 790 283Q806 267 828 266Q852 267 866 283Q876 302 873 352L866 352L858 352Q858 336 856 326L848 330Q842 308 818 294.500Q800 306 793 332L792 352Z" fill="#554850"/>
    <path d="M818 294.500Q800 298 790 322M818 294.500Q842 300 852 322M808 272Q792 284 788 308M848 272Q866 284 868 308M824 270Q808 280 800 296M832 270Q848 280 856 296" stroke="#7c6e74" stroke-width="1.400" fill="none"/>
    <path d="M859 330Q868 327 868.500 338Q867 350 859 353Z" fill="#f4d4c6"/>
    <path d="M848 328Q853 350 851 372Q857 350 858 330Z" fill="#554850"/>
    <!-- eyes -->
    <path d="M795 334Q805 328 815 334" stroke="#2a1a1c" stroke-width="2.400" fill="none"/>
    <ellipse cx="805" cy="337" rx="5.500" ry="3.800" fill="#6a4c4c"/><circle cx="805" cy="337" r="1.800" fill="#2a1a1c"/>
    <path d="M830 334Q840 328 850 333" stroke="#2a1a1c" stroke-width="2.400" fill="none"/>
    <ellipse cx="840" cy="337" rx="5.500" ry="3.800" fill="#6a4c4c"/><circle cx="840" cy="337" r="1.800" fill="#2a1a1c"/>
    <path d="M796 325Q806 321 815 324M831 324Q840 321 850 324" stroke="#8a7068" stroke-width="1" fill="none"/>
    <!-- ornaments -->
    <ellipse cx="830" cy="262" rx="8" ry="4.800" fill="#a5dcbc" stroke="#b8902c" stroke-width="1.500"/>
    <ellipse cx="795" cy="269.500" rx="6" ry="4" fill="#a5dcbc" stroke="#b8902c" stroke-width="1.200" transform="rotate(25 795 269.500)"/>
    <ellipse cx="862.500" cy="270" rx="6" ry="4" fill="#a5dcbc" stroke="#b8902c" stroke-width="1.200" transform="rotate(-25 862.500 270)"/>
    <path d="M779 299L792 285" stroke="#c8a232" stroke-width="4.500" stroke-linecap="round"/>
    <path d="M869 288L882 302" stroke="#c8a232" stroke-width="4.500" stroke-linecap="round"/>
    <path d="M777.500 300V348M881.500 303V352" stroke="#8a9a90" stroke-width="1"/>
    <circle cx="777.500" cy="326" r="2" fill="#7ac0b0"/><path d="M775 344L777.500 338L780 344L777.500 352Z" fill="#7ac0b0"/>
    <circle cx="881.500" cy="328" r="2" fill="#7ac0b0"/><path d="M879 348L881.500 342L884 348L881.500 356Z" fill="#7ac0b0"/>
    <path d="M853 376V398" stroke="#8a9a90" stroke-width="1"/><circle cx="853" cy="384" r="2" fill="#7ac0b0"/>
  </g>
  <!-- ===== UI overlays ===== -->
  <!-- dialog area -->
  <rect x="354" y="586" width="608" height="19" fill="#b9c8a8"/>
  <rect x="415" y="587" width="517" height="6" fill="#a8b89a"/>
  <rect x="415" y="478.500" width="517" height="109" fill="url(#dlg)"/>
  <rect x="421.500" y="483" width="505.500" height="97" fill="none" stroke="#c88a8a" stroke-width="1"/>
  <rect x="423.500" y="485" width="501.500" height="93" fill="none" stroke="#e8d8d8" stroke-width="1"/>
  <!-- name tag -->
  <path d="M458 465H548Q556 465 556 472V478Q556 485 548 485H458Z" fill="url(#nm)"/>
  <path d="M452 461.500L465 474.500L452 487.500L439 474.500Z" fill="#d9551f"/>
  <text x="452" y="479.500" text-anchor="middle" font-family="'Liberation Serif','Noto Serif CJK SC',serif" font-size="13" font-weight="bold" fill="#fff">名</text>
  <text x="500" y="480" text-anchor="middle" font-family="'Liberation Serif','Noto Serif CJK SC',serif" font-size="12.500" fill="#505a50">小翠</text>
  <text x="444.300" y="511" font-family="'Liberation Serif','Noto Serif CJK SC',serif" font-size="14.200" font-weight="500" letter-spacing="1.730" fill="#1a1a1a">夫人没有其他事情，我就先下去了。</text>
  <!-- lotus / fish -->
  <path d="M901 594Q930 586 970 590Q972 596 940 597Q915 598 901 594Z" fill="#6cbb3e"/>
  <path d="M932 588Q928 572 938 568Q945 562 952 568Q961 572 958 588Q946 593 932 588Z" fill="#f1dce6"/>
  <path d="M926 584Q930 576 938 580L944 590Q932 592 926 584ZM964 582Q958 576 952 580L948 590Q960 592 964 582Z" fill="#f4e6ec"/>
  <path d="M979 545Q988 543 994 554Q999 564 996 576L992 570Q990 562 984 558Q978 552 979 545Z" fill="#e8351c"/><path d="M996 570L998 578L991 577Z" fill="#ee6a3a"/>
  <path d="M972 579Q980 581 984 592Q986 600 984 604Q980 596 975 590Q971 584 972 579Z" fill="#ea8a32"/>
  <path d="M912 568Q922 563 936 567" stroke="#f6f2f2" stroke-width="2" fill="none" opacity=".85"/>
  <path d="M392 590Q416 584 448 588Q420 596 392 590Z" fill="#86bd5c"/>
  <path d="M700 596L712 593M730 597L740 593" stroke="#e88a5a" stroke-width="1.500"/>
  <!-- option bars -->
  <rect x="519" y="354.500" width="332" height="20.500" rx="2" fill="url(#bar)"/>
  <rect x="519" y="391" width="332" height="20.500" rx="2" fill="url(#bar)"/>
  <text x="691" y="371" text-anchor="middle" font-family="'Liberation Serif','Noto Serif CJK SC',serif" font-size="14.500" font-weight="500" letter-spacing="1.500" fill="#fff">让她下去</text>
  <text x="690.800" y="407" text-anchor="middle" font-family="'Liberation Serif','Noto Serif CJK SC',serif" font-size="14.500" font-weight="500" letter-spacing="1.500" fill="#fff">还有事情交代</text>
  <!-- orange handles -->
  <g fill="#e2601c" stroke="#e2601c">
    <path d="M775 352H846" stroke-width="1" opacity=".85"/><rect x="772" y="349" width="8" height="6" rx="1" stroke="none"/><path d="M846 348L850 352L846 356L842 352Z" stroke="none"/>
    <path d="M851 360H872" stroke-width="1.300"/><rect x="866" y="357" width="9" height="6" rx="1" stroke="none"/>
    <path d="M775 389H846" stroke-width="1" opacity=".85"/><rect x="772" y="386" width="8" height="6" rx="1" stroke="none"/><path d="M846 385L850 389L846 393L842 389Z" stroke="none"/>
    <path d="M851 397H872" stroke-width="1.300"/><rect x="866" y="394" width="9" height="6" rx="1" stroke="none"/>
  </g>
  <circle cx="871" cy="376" r="6.500" fill="#ee5c8c"/><path d="M868.500 372.500L875 376.500L871.500 377L870 380Z" fill="#fff"/>
  <circle cx="871" cy="412.500" r="6.500" fill="#ee5c8c"/><path d="M868.500 409L875 413L871.500 413.500L870 416.500Z" fill="#fff"/>
  <!-- round buttons -->
  <circle cx="997" cy="260" r="13" fill="#3a2a1c" fill-opacity=".55" stroke="#f4f4f4" stroke-width="2"/>
  <path d="M992 254.500H1004M992 260H1004M992 265.500H1004" stroke="#f4f4f4" stroke-width="2"/><path d="M988.500 254.500H989.500M988.500 260H989.500M988.500 265.500H989.500" stroke="#f4f4f4" stroke-width="2.200" stroke-linecap="round"/>
  <circle cx="997" cy="300" r="13" fill="#3a2a1c" fill-opacity=".55" stroke="#f4f4f4" stroke-width="2"/>
  <path d="M989 296H1005L1003 304H991Z" fill="#f4f4f4" opacity=".9"/><path d="M992 299H1002M993 302H1001" stroke="#5a4a3c" stroke-width="1"/>
</g>
</svg>
  <div class="abs" style="left:676px;top:236px;width:8px;height:216px;background:#cfcfd6;border-radius:3px"></div>
  <div class="abs" style="left:284px;top:671px;width:107px;height:6px;background:#c4c4c4;border-radius:3px 3px 0 0"></div>
  <div id="zoom">
    <svg class="abs" style="left:22px;top:9px" width="20" height="20" viewBox="0 0 20 20" fill="none" stroke="#f0f0f0" stroke-width="1.500" stroke-linecap="round" stroke-linejoin="round"><path d="M3 7h9a5 5 0 0 1 0 10H6"/><path d="M7 3L3 7l4 4"/></svg>
    <svg class="abs" style="left:51px;top:9px" width="20" height="20" viewBox="0 0 20 20" fill="none" stroke="#a6a6a6" stroke-width="1.500" stroke-linecap="round" stroke-linejoin="round"><path d="M17 7H8a5 5 0 0 0 0 10h6"/><path d="M13 3l4 4-4 4"/></svg>
    <div class="abs" style="left:91px;top:10px;width:1px;height:18px;background:#cfcfcf"></div>
    <svg class="abs" style="left:100px;top:9px" width="20" height="20" viewBox="0 0 20 20" fill="none" stroke="#f0f0f0" stroke-width="1.300"><circle cx="10" cy="10" r="8.500"/><path d="M6 10h8"/></svg>
    <div class="abs" style="left:130px;top:11.500px;width:58px;text-align:center;font-size:13px;line-height:16px;color:#fff;font-family:'Liberation Sans',sans-serif">53 %</div>
    <svg class="abs" style="left:198px;top:9px" width="20" height="20" viewBox="0 0 20 20" fill="none" stroke="#f0f0f0" stroke-width="1.300"><circle cx="10" cy="10" r="8.500"/><path d="M6 10h8M10 6v8"/></svg>
    <svg class="abs" style="left:244px;top:10px" width="18" height="18" viewBox="0 0 18 18" fill="none" stroke="#f0f0f0" stroke-width="1.400" stroke-linecap="round" stroke-linejoin="round"><path d="M1.500 6V1.500H6M12 1.500h4.500V6M16.500 12v4.500H12M6 16.500H1.500V12M2 2L16 16M16 2L2 16"/></svg>
  </div>
  <svg class="abs" style="left:306px;top:65px" width="14" height="20" viewBox="0 0 14 20"><path d="M1 1V15.500L4.500 12.200L7.200 18.500L9.500 17.500L6.800 11.500H11.500Z" fill="#fff" stroke="#222" stroke-width="1.100" stroke-linejoin="round"/></svg>
</div>
<div id="rp">
  <div class="ph"></div>
  <div class="lb" style="top:65px">对话框</div>
  <div class="cb on" style="left:89px;top:65px"><svg width="12" height="12" viewBox="0 0 12 12" style="position:absolute;left:0;top:0" fill="none" stroke="#fff" stroke-width="1.800"><path d="M2.500 6l2.500 2.500 4.500-5"/></svg></div>
  <div class="tx" style="left:107px;top:65px;color:#333">启用对话框</div>
  <div class="sep" style="top:104px"></div>
  <div class="lb" style="top:131px;color:#999">画布大小</div>
  <div class="tx" style="left:89px;top:131px;color:#aaa;letter-spacing:.3px">1280px * 720px</div>
  <div class="sep" style="top:171px"></div>
  <div class="lb" style="top:198.500px">逻辑锁</div>
  <div class="cb" style="left:89px;top:199px"></div>
  <div class="tx" style="left:107px;top:198.500px;color:#333">启用逻辑锁</div>
  <div class="tx" style="left:17px;top:225px;color:#aaa">* 若不符合条件，则跳转至下一个</div>
  <div class="sep" style="top:275px"></div>
  <div class="abs" style="left:0;top:632px;width:141px;height:44px;background:#f6f6f4;border-top:1px solid #ececec"></div>
</div>
</body>
</html>
